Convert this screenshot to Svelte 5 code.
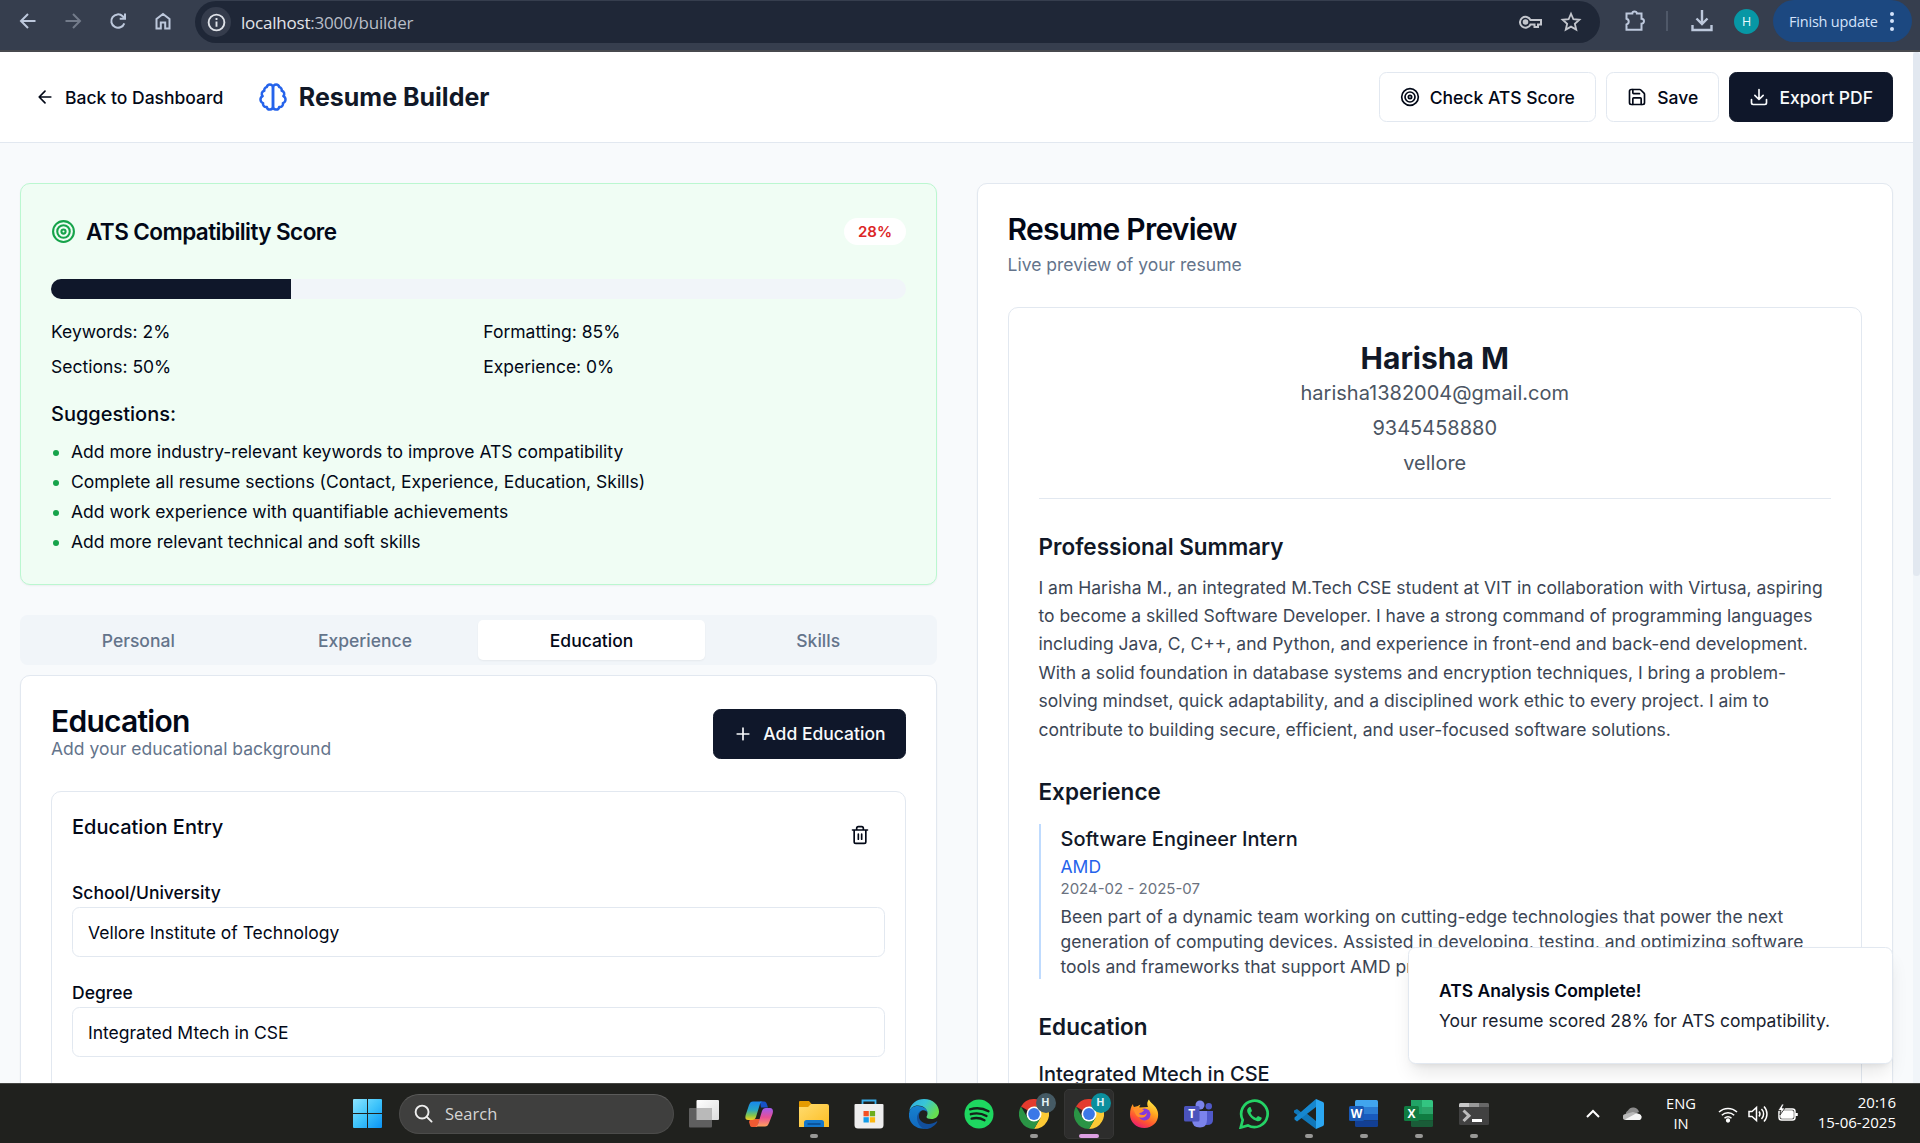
<script>
  const stats = ['Keywords: 2%', 'Formatting: 85%', 'Sections: 50%', 'Experience: 0%'];
  const suggestions = [
    'Add more industry-relevant keywords to improve ATS compatibility',
    'Complete all resume sections (Contact, Experience, Education, Skills)',
    'Add work experience with quantifiable achievements',
    'Add more relevant technical and soft skills'
  ];
  const tabs = ['Personal', 'Experience', 'Education', 'Skills'];
  let active = $state('Education');
  const score = 28;
  const fields = [
    { label: 'School/University', value: 'Vellore Institute of Technology' },
    { label: 'Degree', value: 'Integrated Mtech in CSE' }
  ];
  const summary = [
    'I am Harisha M., an integrated M.Tech CSE student at VIT in collaboration with Virtusa, aspiring',
    'to become a skilled Software Developer. I have a strong command of programming languages',
    'including Java, C, C++, and Python, and experience in front-end and back-end development.',
    'With a solid foundation in database systems and encryption techniques, I bring a problem-',
    'solving mindset, quick adaptability, and a disciplined work ethic to every project. I aim to',
    'contribute to building secure, efficient, and user-focused software solutions.'
  ];
  const duties = [
    'Been part of a dynamic team working on cutting-edge technologies that power the next',
    'generation of computing devices. Assisted in developing, testing, and optimizing software',
    'tools and frameworks that support AMD products.'
  ];
</script>

{#snippet target()}
  <svg class="line" viewBox="0 0 24 24"><circle cx="12" cy="12" r="10" /><circle cx="12" cy="12" r="6" /><circle cx="12" cy="12" r="2" /></svg>
{/snippet}

{#snippet chrome(badge)}
  <svg class="app-icon" viewBox="0 0 30 30">
    <path d="M15 15 2 7.500A15 15 0 0 1 28 7.500H15Z" fill="#e33b2e" />
    <path d="M15 15V7.500H28A15 15 0 0 1 15 30L21.500 18.700Z" fill="#fcc934" />
    <path d="M15 15l6.500 3.700L15 30A15 15 0 0 1 2 7.500l6.500 11.200Z" fill="#2a9445" />
    <circle cx="15" cy="15" r="7.500" fill="#fff" /><circle cx="15" cy="15" r="5.900" fill="#3b78e7" />
  </svg>
  <span class="profile {badge}">H</span>
{/snippet}

<div class="screen">
  <div class="toolbar">
    <div class="nav">
      <span><svg viewBox="0 0 20 20"><path d="M17.500 10H3.500M10 3 3 10l7 7" /></svg></span>
      <span class="dim"><svg viewBox="0 0 20 20"><path d="M2.500 10h14M10 3l7 7-7 7" /></svg></span>
      <span><svg viewBox="0 0 20 20"><path d="M16.300 12.300A6.700 6.700 0 1 1 14.700 5.300L17 7.500M17 2.500v5.200h-5.300" /></svg></span>
      <span><svg viewBox="0 0 20 20"><path d="M3.500 17.500V8L10 3l6.500 5v9.500h-4.300v-6H7.800v6Z" /></svg></span>
    </div>
    <div class="address">
      <span class="info"><svg viewBox="0 0 20 20"><circle cx="10" cy="10" r="7.500" /><path d="M10 9v5M10 5.800v1.700" /></svg></span>
      <span class="url"><b>localhost</b>:3000/builder</span>
      <svg class="key" viewBox="0 0 24 16"><path d="M11.500 6H22v4.500h-3V13h-3.500v-2.500h-4A5.500 5.500 0 1 1 11.500 6Z" /><circle cx="6.500" cy="8" r="1.800" fill="currentColor" /></svg>
      <svg class="star" viewBox="0 0 24 24"><path d="m12 3 2.600 6 6.500.6-4.900 4.300 1.500 6.400L12 17l-5.700 3.300 1.500-6.400-4.900-4.300L9.400 9Z" /></svg>
    </div>
    <svg class="puzzle" viewBox="0 0 24 24"><path d="M3.500 4.500h5.800a2.300 2 0 0 1 4.600 0h4.600v5.200a2.500 2.500 0 0 1 0 5v6h-15v-5.200a3 3 0 0 0 0-5.800Z" /></svg>
    <span class="divider"></span>
    <svg class="dl" viewBox="0 0 24 24"><path d="M12 1v14M6.500 9.500 12 15l5.500-5.500M2.500 16v5h19v-5" /></svg>
    <span class="avatar">H</span>
    <div class="update"><span>Finish update</span><i class="dots"><i></i><i></i><i></i></i></div>
  </div>

  <div class="viewport">
    <div class="page">
      <header>
        <div class="brand">
          <button class="back"><svg class="line" viewBox="0 0 24 24"><path d="m12 19-7-7 7-7M19 12H5" /></svg>Back to Dashboard</button>
          <svg class="line brain" viewBox="0 0 24 24">
            <path d="M9.500 2A2.500 2.500 0 0 1 12 4.500v15a2.500 2.500 0 0 1-4.960.440 2.500 2.500 0 0 1-2.960-3.080 3 3 0 0 1-.340-5.580 2.500 2.500 0 0 1 1.320-4.240 2.500 2.500 0 0 1 1.980-3A2.500 2.500 0 0 1 9.500 2Z" />
            <path d="M14.500 2A2.500 2.500 0 0 0 12 4.500v15a2.500 2.500 0 0 0 4.960.440 2.500 2.500 0 0 0 2.960-3.080 3 3 0 0 0 .340-5.580 2.500 2.500 0 0 0-1.320-4.240 2.500 2.500 0 0 0-1.980-3A2.500 2.500 0 0 0 14.500 2Z" />
          </svg>
          <h1>Resume Builder</h1>
        </div>
        <div class="actions">
          <button class="btn">{@render target()}Check ATS Score</button>
          <button class="btn"><svg class="line" viewBox="0 0 24 24"><path d="M15.200 3a2 2 0 0 1 1.400.6l3.800 3.800a2 2 0 0 1 .6 1.400V19a2 2 0 0 1-2 2H5a2 2 0 0 1-2-2V5a2 2 0 0 1 2-2z" /><path d="M17 21v-7a1 1 0 0 0-1-1H8a1 1 0 0 0-1 1v7M7 3v4a1 1 0 0 0 1 1h7" /></svg>Save</button>
          <button class="btn dark"><svg class="line" viewBox="0 0 24 24"><path d="M21 15v4a2 2 0 0 1-2 2H5a2 2 0 0 1-2-2v-4M7 10l5 5 5-5M12 15V3" /></svg>Export PDF</button>
        </div>
      </header>

      <main>
        <div class="column">
          <section class="card ats">
            <div class="ats-head">
              <h3>{@render target()}ATS Compatibility Score</h3>
              <span class="badge">{score}%</span>
            </div>
            <div class="progress"><div class="bar" style="width: {score}%"></div></div>
            <div class="stats">
              {#each stats as s}<span>{s}</span>{/each}
            </div>
            <h4>Suggestions:</h4>
            <ul>
              {#each suggestions as s}<li><i></i>{s}</li>{/each}
            </ul>
          </section>

          <div class="tabs">
            {#each tabs as t}
              <button class:active={active === t} onclick={() => (active = t)}>{t}</button>
            {/each}
          </div>

          <section class="card form">
            <div class="form-head">
              <div><h2>Education</h2><p class="muted">Add your educational background</p></div>
              <button class="btn dark"><svg class="line" viewBox="0 0 24 24"><path d="M5 12h14M12 5v14" /></svg>Add Education</button>
            </div>
            <div class="entry">
              <div class="entry-head">
                <h4>Education Entry</h4>
                <button class="trash" aria-label="Delete"><svg class="line" viewBox="0 0 24 24"><path d="M3 6h18M19 6v14c0 1-1 2-2 2H7c-1 0-2-1-2-2V6M8 6V4c0-1 1-2 2-2h4c1 0 2 1 2 2v2M10 11v6M14 11v6" /></svg></button>
              </div>
              {#each fields as f}
                <label><span>{f.label}</span><input value={f.value} /></label>
              {/each}
            </div>
          </section>
        </div>

        <section class="card preview">
          <h2>Resume Preview</h2>
          <p class="muted sub">Live preview of your resume</p>
          <article>
            <div class="person">
              <h2>Harisha M</h2>
              <p>harisha1382004@gmail.com</p>
              <p>9345458880</p>
              <p>vellore</p>
            </div>
            <h3>Professional Summary</h3>
            <div class="summary">
              {#each summary as l}<div>{l}</div>{/each}
            </div>
            <h3>Experience</h3>
            <div class="job">
              <h4>Software Engineer Intern</h4>
              <p class="company">AMD</p>
              <p class="dates">2024-02 - 2025-07</p>
              <div class="duties">{#each duties as l}<div>{l}</div>{/each}</div>
            </div>
            <h3>Education</h3>
            <h4 class="degree">Integrated Mtech in CSE</h4>
          </article>
        </section>
      </main>
    </div>
    <div class="scroll"><div class="thumb"></div></div>
    <div class="toast"><b>ATS Analysis Complete!</b><span>Your resume scored 28% for ATS compatibility.</span></div>
  </div>

  <footer>
    <svg class="win" viewBox="0 0 29 29">
      <defs><linearGradient id="wg" x1="0" y1="0" x2="1" y2="1"><stop offset="0" stop-color="#8ce4ff" /><stop offset=".5" stop-color="#3fc4fb" /><stop offset="1" stop-color="#0a93f5" /></linearGradient></defs>
      <path d="M0 1a1 1 0 0 1 1-1h13v14H0ZM15 0h13a1 1 0 0 1 1 1v13H15ZM0 15h14v14H1a1 1 0 0 1-1-1ZM15 15h14v13a1 1 0 0 1-1 1H15Z" fill="url(#wg)" />
    </svg>
    <div class="search"><svg viewBox="0 0 20 20"><circle cx="8.500" cy="8.500" r="6.800" /><path d="m13.500 13.500 5 5" /></svg>Search</div>
    <div class="apps">
      <span>
        <svg class="app-icon" viewBox="0 0 30 30"><defs><linearGradient id="tv" x1="0" y1="0" x2="1" y2="1"><stop offset="0" stop-color="#fff" /><stop offset="1" stop-color="#ddd" /></linearGradient></defs><rect x="7.500" y="1" width="22.500" height="20" rx="1" fill="url(#tv)" /><rect y="9" width="23" height="19.500" rx="1" fill="#5f5f5f" /><path d="M7.500 9H23v12H7.500Z" fill="#b9b9b9" /></svg>
      </span>
      <span>
        <svg class="app-icon" viewBox="0 0 30 30">
          <defs>
            <linearGradient id="c1" x1="0" y1="0" x2="0" y2="1"><stop offset="0" stop-color="#1787ee" /><stop offset=".45" stop-color="#28a7c5" /><stop offset=".75" stop-color="#85c64b" /><stop offset="1" stop-color="#f3cc22" /></linearGradient>
            <linearGradient id="c2" x1="0" y1="0" x2="0" y2="1"><stop offset="0" stop-color="#9f5cf0" /><stop offset=".5" stop-color="#e74f96" /><stop offset="1" stop-color="#ffa25c" /></linearGradient>
          </defs>
          <path d="M16 2.500h4c2 0 2.500 1.500 3 3l1 3h-7Z" fill="#1652c8" />
          <path d="M8 28h5l3-8H6l-1 3c1 3 1 5 3 5Z" fill="#ef5a32" />
          <path d="M9 2.500h10c-2 0-3 2-3.500 4L12 18c-.6 2-2 3-4 3H4c-3 0-3-3-2-6l3-9c1-2.500 2-3.500 4-3.500Z" fill="url(#c1)" />
          <path d="M21 27.500H11c2 0 3-2 3.500-4L18 12c.6-2 2-3 4-3h4c3 0 3.500 3 2.500 6l-3.500 9c-1 2.500-2 3.500-4 3.500Z" fill="url(#c2)" />
        </svg>
      </span>
      <span class="open">
        <svg class="app-icon" viewBox="0 0 30 30"><defs><linearGradient id="fg" x1="0" y1="0" x2="1" y2="1"><stop offset="0" stop-color="#ffdc70" /><stop offset="1" stop-color="#fdbd22" /></linearGradient></defs><path d="M0 3q0-1 1-1h9l3 3.500V9H0Z" fill="#e59b00" /><path d="M0 8h9l3-3h16q2 0 2 2v21H0Z" fill="url(#fg)" /><path d="M5 28v-4.500q0-2.500 2.500-2.500h15q2.500 0 2.500 2.500v4.500Z" fill="#1477cc" /><path d="M8.500 25h13" stroke="#09488c" stroke-width="1.500" /></svg>
      </span>
      <span>
        <svg class="app-icon" viewBox="0 0 30 30"><path d="M8.500 6V1.500h13V6" fill="none" stroke="#39aeea" stroke-width="1.800" /><path d="M.5 6q0-1 1-1h27q1 0 1 1v20q0 3.500-3.500 3.500H4Q.5 29.500.5 26Z" fill="#eeeeee" /><path d="M9.500 12h5.300v5.300H9.500Z" fill="#f25022" /><path d="M15.800 12h5.300v5.300h-5.300Z" fill="#6dad1d" /><path d="M9.500 18.200h5.300v5.300H9.500Z" fill="#139ce8" /><path d="M15.800 18.200h5.300v5.300h-5.300Z" fill="#fbb812" /></svg>
      </span>
      <span>
        <svg class="app-icon" viewBox="0 0 30 30">
          <defs>
            <linearGradient id="e1" x1="0" y1="0" x2="1" y2=".5"><stop offset="0" stop-color="#30a9e0" /><stop offset=".5" stop-color="#38c5d8" /><stop offset="1" stop-color="#66df4f" /></linearGradient>
            <linearGradient id="e2" x1="0" y1="0" x2="0" y2="1"><stop offset="0" stop-color="#1681d0" /><stop offset="1" stop-color="#1168bd" /></linearGradient>
          </defs>
          <path d="M.3 12C1.500 4.500 8 0 15 0c9 0 15 6.200 15 12.500 0 5-3.700 7.500-7.500 7.500-3.200 0-5-1-5-2 0-.8 1-1.300 1-3.500C18.500 10 14 6.500 9 6.500 4.500 6.500 1.500 9 .3 12Z" fill="url(#e1)" />
          <path d="M.2 14C.5 9.500 4 7 9 7c5 0 9.500 3 9.500 7-.4-1.700-2-2.700-4-2.700-4 0-6 4-4.500 8.700 1.500 5 6 8.500 10 9C8 32.500-1 24-.2 14Z" fill="url(#e2)" />
          <path d="M12 12c-4 4-2 10 3 12 4 1.600 9 1 12.500-1.500.6-.4 1 .1.600.7C25.500 27 21.500 30 16.500 30 10 29 6 20 9 15c.7-1.500 1.700-2.500 3-3Z" fill="#124f9c" />
        </svg>
      </span>
      <span>
        <svg class="app-icon" viewBox="0 0 30 30"><circle cx="15" cy="15" r="14.500" fill="#1ed760" /><path d="M6 10.300c6-1.700 13-1.200 18.500 1.900M6.800 15.200c5.300-1.500 11-.8 15.700 1.800M7.600 19.600c4.600-1.200 9-.6 12.900 1.600" fill="none" stroke="#15201a" stroke-width="2.300" stroke-linecap="round" /></svg>
      </span>
      <span class="open">{@render chrome('slate')}</span>
      <span class="open current">{@render chrome('teal')}</span>
      <span>
        <svg class="app-icon" viewBox="0 0 30 30">
          <defs><linearGradient id="ff" x1=".8" y1="0" x2=".3" y2="1"><stop offset="0" stop-color="#fff24a" /><stop offset=".4" stop-color="#ffa31f" /><stop offset=".75" stop-color="#ff5033" /><stop offset="1" stop-color="#e81a77" /></linearGradient></defs>
          <path d="M4 5c0 1.500.5 2.300 1 3l4-1c0 0 1-1 2.500-1.200-1 1-1.200 2-1 2.700L19 8c-1.500-3-.5-6 1-7.500.5 3 7 5.500 8.700 12C31 22 24 29 15.500 29 7 29 1 23 1 15.500 1 11 2 7.500 4 5Z" fill="url(#ff)" />
          <circle cx="15.500" cy="15.500" r="6" fill="#8539dc" /><path d="M4 10c4-1 7-1 11 1-1 3-4 2-5 4 3 2 6 1 8-1-1 6-8 6-11 2Z" fill="#ff902c" />
        </svg>
      </span>
      <span>
        <svg class="app-icon" viewBox="0 0 30 30"><circle cx="16" cy="6" r="4.500" fill="#7b83eb" /><circle cx="24.800" cy="7.300" r="3.200" fill="#5059c9" /><path d="M20 12h9v9q0 5-6 5h-3Z" fill="#5059c9" /><path d="M8 12h15v8.500q0 8-7 8-8 0-8-8Z" fill="#7b83eb" /><rect y="7" width="15.500" height="15.500" rx="1.500" fill="#4b53bc" /><text x="7.700" y="18.800" text-anchor="middle" class="glyph">T</text></svg>
      </span>
      <span>
        <svg class="app-icon" viewBox="0 0 30 30"><path d="M1.700 28.500 3.700 21a13.200 13.200 0 1 1 5.200 5.400Z" fill="none" stroke="#25d366" stroke-width="2.700" /><path d="M10.500 8c-2 1-3 3-2 5.500 1.700 4 5 7.300 9.300 8.500 2.600.7 5-.8 5-3.200L19 17l-2 2c-2.500-1-4.500-3-5.500-5.300L13 12l-1.500-4Z" fill="#25d366" /></svg>
      </span>
      <span class="open">
        <svg class="app-icon" viewBox="0 0 30 30"><path d="M22 0 7.500 13.500 3 10 0 11.500v2L22 30v-8L9 11.500" fill="#1077b9" /><path d="M22 8 3 22.500.5 20.500v-2L22 0Z" fill="#1687cf" /><path d="M22 0 29 3q1 .5 1 2v20q0 1.500-1 2l-7 3Z" fill="#2ba7f2" /></svg>
      </span>
      <span class="open">
        <svg class="app-icon" viewBox="0 0 30 30"><path d="M6 2.500q0-1.500 1.500-1.500h20q1.500 0 1.500 1.500V8H6Z" fill="#41a5ee" /><path d="M6 8h23v7H6Z" fill="#2b7cd3" /><path d="M6 15h23v6.500H6Z" fill="#185abd" /><path d="M6 21.500h23v5q0 1.500-1.500 1.500h-20Q6 28 6 26.500Z" fill="#123f94" /><rect y="7" width="15" height="15" rx="1.500" fill="#1858b5" /><text x="7.500" y="18.700" text-anchor="middle" class="glyph">W</text></svg>
      </span>
      <span class="open">
        <svg class="app-icon" viewBox="0 0 30 30"><path d="M7 2.500Q7 1 8.500 1h19Q29 1 29 2.500V8H7Z" fill="#33c481" /><path d="M7 1h11v14H7Z" fill="#21a366" /><path d="M18 8h11v7H18Z" fill="#2ba469" /><path d="M7 15h22v6.500H7Z" fill="#107c41" /><path d="M7 21.500h22v5q0 1.500-1.500 1.500h-19Q7 28 7 26.500Z" fill="#1a5c38" /><rect y="7" width="15" height="15" rx="1.500" fill="#107c41" /><text x="7.500" y="18.700" text-anchor="middle" class="glyph">X</text></svg>
      </span>
      <span class="open">
        <svg class="app-icon" viewBox="0 0 30 30"><rect y="4" width="30" height="22" rx="1.500" fill="#414141" /><path d="M0 8V5.500Q0 4 1.500 4H10v4Z" fill="#c8c8c8" /><path d="M10 4h10v4H10Z" fill="#999" /><path d="M20 4h8.500Q30 4 30 5.500V8H20Z" fill="#686868" /><path d="m4.500 11.500 5.500 5.200-5.500 5.300" fill="none" stroke="#bdbdbd" stroke-width="3" /><path d="M13 21.500h10" stroke="#fff" stroke-width="3" /></svg>
      </span>
    </div>
    <div class="tray">
      <svg class="chev" viewBox="0 0 14 10"><path d="m1 8 6-6 6 6" /></svg>
      <svg class="cloud" viewBox="0 0 20 14"><path d="M4 10a4 4 0 0 1 1-6.500A6 6 0 0 1 16 5Z" fill="#8c8c8c" /><path d="M3 13a3 3 0 0 1-.5-6L10 5l6 2a3.200 3.200 0 0 1 .5 6Z" fill="#b9b9b9" /><path d="M3.500 13a3 3 0 0 1-1.500-.5L13 6.500a4 4 0 0 1 3 .5 3.100 3.100 0 0 1 .5 6Z" fill="#f5f5f5" /></svg>
      <div class="lang">ENG<br />IN</div>
      <svg class="t20" viewBox="0 0 20 20"><path d="M1 8a13 13 0 0 1 18 0M3.800 11.200a9 9 0 0 1 12.400 0M6.500 14.300a5 5 0 0 1 7 0" /><circle cx="10" cy="16.500" r="1.400" fill="#fff" /></svg>
      <svg class="t20" viewBox="0 0 20 20"><path d="M1 7.500h3L8.500 3.500v13L4 12.500H1ZM11 7.500a4 4 0 0 1 0 5M13.500 5a7 7 0 0 1 0 10M16 2.500a11 11 0 0 1 0 15" /></svg>
      <svg class="t20" viewBox="0 0 20 20"><rect x="1" y="5" width="16" height="11" rx="2.500" /><rect x="3" y="7" width="12" height="7" rx="1" fill="#fff" /><path d="M18.500 9v3" stroke-width="2.500" /><path d="M4 0 0 6.500h3L2 11l5-7H4.200L6 0Z" fill="#fff" stroke="#20201e" stroke-width=".8" /></svg>
      <div class="clock">20:16<br />15-06-2025</div>
    </div>
  </footer>
</div>

<style>
  :global(body) { margin: 0; overflow: hidden; }
  * { box-sizing: border-box; }
  h1, h2, h3, h4, p, ul { margin: 0; padding: 0; font-weight: inherit; }
  button, input { font: inherit; color: inherit; background: none; border: 0; padding: 0; }
  svg { flex: none; display: block; }
  .screen { width: 1920px; height: 1143px; display: flex; flex-direction: column; overflow: hidden; font-family: Inter, "Liberation Sans", sans-serif; font-size: 17.5px; line-height: 25px; color: #020817; }
  .line { width: 20px; height: 20px; fill: none; stroke: currentColor; stroke-width: 2; stroke-linecap: round; stroke-linejoin: round; }

  /* browser toolbar */
  .toolbar { height: 52px; flex: none; display: flex; align-items: center; padding: 0 8px 8px 5px; background: #363e4e; border-bottom: 2px solid #47494d; font-family: "Open Sans", "Noto Sans", sans-serif; color: #bdc8dc; }
  .toolbar svg { fill: none; stroke: currentColor; stroke-width: 2; }
  .nav { display: flex; width: 190px; }
  .nav span { width: 45px; display: grid; place-items: center; }
  .nav svg { width: 20px; height: 20px; }
  .nav .dim { color: #737b8a; }
  .address { flex: 1; height: 42px; margin-top: 2px; border-radius: 21px; background: #1f2737; display: flex; align-items: center; padding: 0 18px 0 6px; color: #c3c6cd; }
  .info { width: 30px; height: 30px; border-radius: 50%; background: #353c4c; display: grid; place-items: center; color: #dfe2e8; }
  .info svg { width: 21px; height: 21px; stroke-width: 1.8; }
  .url { margin-left: 10px; flex: 1; color: #b9bec8; font-size: 17px; letter-spacing: -0.22px; }
  .url b { font-weight: 400; color: #e2e4e9; }
  .key { width: 24px; height: 16px; margin-right: 17px; }
  .star { width: 22px; height: 22px; }
  .puzzle { width: 24px; height: 24px; margin-left: 23px; }
  .divider { width: 2px; height: 20px; margin-left: 19px; background: #4f5868; }
  .dl { width: 24px; height: 24px; margin-left: 22px; }
  .toolbar .dl { stroke-width: 2.4; }
  .avatar { width: 25px; height: 25px; margin-left: 20px; border-radius: 50%; background: #0797a5; color: #e8fbff; font-size: 12.5px; display: grid; place-items: center; }
  .update { width: 139px; height: 42px; margin-left: 14px; border-radius: 21px; background: #1c4880; color: #d4e3fb; display: flex; align-items: center; justify-content: space-between; padding: 0 18px 0 16px; font-size: 14.5px; letter-spacing: -0.2px; white-space: nowrap; }
  .dots { display: grid; gap: 3.5px; }
  .dots i { width: 4px; height: 4px; border-radius: 50%; background: #d4e3fb; }

  /* application */
  .viewport { position: relative; height: 1031px; flex: none; display: flex; overflow: hidden; }
  .page { flex: 1; background: #f8fafc; }
  .scroll { width: 7px; background: #f1f5f9; }
  .thumb { height: 524px; background: #e2e8f0; border-radius: 4px; }
  header { height: 91px; background: #fff; border-bottom: 1px solid #e2e8f0; display: flex; justify-content: space-between; align-items: center; padding: 0 20px; }
  .brand, .actions { display: flex; align-items: center; }
  .actions { gap: 10px; }
  .back { height: 45px; padding: 0 15px; display: flex; align-items: center; gap: 10px; font-weight: 500; }
  .brain { width: 30px; height: 30px; margin: 0 10.5px 0 20px; color: #2563eb; }
  h1 { font-size: 25px; line-height: 35px; font-weight: 700; color: #111827; }
  .btn { height: 50px; border: 1px solid #e2e8f0; border-radius: 7.5px; background: #fff; padding: 0 20.2px; display: flex; align-items: center; gap: 10px; font-weight: 500; white-space: nowrap; }
  .btn.dark { background: #0f172a; border-color: #0f172a; color: #f8fafc; padding: 0 19px; }

  main { display: grid; grid-template-columns: 1fr 1fr; gap: 40px; padding: 40px 20px; align-items: start; }
  .card { border: 1px solid #e2e8f0; border-radius: 10px; background: #fff; padding: 30px; box-shadow: 0 1px 2px rgba(0, 0, 0, 0.05); }
  .ats { background: #f0fdf4; border-color: #bbf7d0; }
  .ats-head { display: flex; justify-content: space-between; align-items: center; height: 35px; margin-bottom: 30px; }
  .ats-head h3 { display: flex; align-items: center; gap: 10px; font-size: 22.5px; font-weight: 600; letter-spacing: -0.025em; }
  .ats-head h3 :global(svg) { width: 25px; height: 25px; color: #16a34a; }
  .badge { background: #fff; color: #dc2626; border-radius: 14px; padding: 3.5px 13.5px; font-size: 15px; line-height: 20px; font-weight: 600; }
  .progress { height: 20px; border-radius: 10px; background: #f1f5f9; overflow: hidden; }
  .bar { height: 100%; background: #0f172a; box-sizing: content-box; padding-right: 0.6px; }
  .stats { display: grid; grid-template-columns: 1fr 1fr; gap: 10px; margin: 20px 0; }
  h4 { font-size: 20px; line-height: 30px; font-weight: 500; }
  ul { list-style: none; display: grid; gap: 5px; margin-top: 10px; }
  li { display: flex; align-items: center; }
  li i { width: 6px; height: 6px; border-radius: 50%; background: #16a34a; margin: 3px 12px 0 2px; }

  .tabs { height: 50px; margin: 30px 0 10px; padding: 5px; border-radius: 7.5px; background: #f1f5f9; display: grid; grid-template-columns: repeat(4, 1fr); color: #64748b; font-weight: 500; }
  .tabs button { border-radius: 5px; }
  .tabs .active { background: #fff; color: #020817; box-shadow: 0 1px 2px rgba(0, 0, 0, 0.05); }
  .form { height: 700px; }
  .form-head { display: flex; justify-content: space-between; align-items: center; height: 55px; margin-bottom: 30px; }
  h2 { font-size: 30px; line-height: 30px; font-weight: 600; letter-spacing: -0.025em; }
  .muted { color: #64748b; }
  .entry { border: 1px solid #e2e8f0; border-radius: 10px; padding: 20px; height: 500px; }
  .entry-head { display: flex; justify-content: space-between; align-items: flex-start; height: 45px; margin-bottom: 20px; }
  .trash { height: 45px; padding: 0 15px; }
  label { display: block; font-weight: 500; margin-bottom: 20px; }
  label span { display: block; height: 30px; line-height: 32px; }
  input { display: block; width: 100%; height: 50px; border: 1px solid #e2e8f0; border-radius: 7.5px; padding: 0 15px; background: #fff; font-weight: 400; }

  .preview { height: 1300px; }
  .sub { margin-top: 7.5px; }
  article { margin-top: 30px; border: 1px solid #e2e8f0; border-radius: 10px; padding: 30px; height: 1100px; color: #111827; }
  .person { text-align: center; border-bottom: 1px solid #e2e8f0; padding-bottom: 20px; margin-bottom: 30px; color: #4b5563; font-size: 20px; line-height: 30px; display: grid; }
  .person h2 { line-height: 40px; font-weight: 700; color: #111827; letter-spacing: 0; }
  .person p + p { margin-top: 5px; }
  article h3 { font-size: 22.5px; line-height: 35px; font-weight: 600; }
  .summary { margin: 10px 0 30px; line-height: 28.44px; color: #3c4655; white-space: nowrap; }
  .job { margin: 15px 0 30px; border-left: 2px solid #bfdbfe; padding-left: 20px; }
  .company { color: #2563eb; }
  .dates { font-size: 15px; line-height: 20px; color: #6b7280; }
  .duties { margin-top: 5px; color: #3c4655; white-space: nowrap; }
  .degree { margin-top: 15px; }

  .toast { position: absolute; right: 27px; bottom: 19px; width: 485px; height: 117px; border: 1px solid #e2e8f0; border-radius: 7.5px; background: #fff; padding: 30px; display: grid; align-content: start; gap: 5px; box-shadow: 0 12px 19px -4px rgba(0, 0, 0, 0.1), 0 5px 7px -5px rgba(0, 0, 0, 0.1); white-space: nowrap; }
  .toast b { font-weight: 600; }
  .toast span { opacity: 0.9; }

  /* desktop taskbar */
  footer { height: 60px; flex: none; background: #20211e; border-top: 1px solid #454643; display: flex; align-items: center; padding: 0 24px 0 353px; color: #fff; font-family: "Open Sans", "Noto Sans", sans-serif; }
  .win { width: 29px; height: 29px; }
  .search { width: 275px; height: 40px; margin: 0 2.5px 0 17px; border-radius: 20px; background: #3f3f3e; border: 1px solid #4c4c4b; border-top-color: #5b5b5a; display: flex; align-items: center; gap: 12px; padding-left: 14px; font-size: 16.5px; color: #d5d5d4; }
  .search svg { width: 19px; height: 19px; fill: none; stroke: #eee; stroke-width: 2; stroke-linecap: round; }
  .apps { display: flex; }
  .apps > span { position: relative; width: 55px; height: 50px; display: grid; place-items: center; }
  .app-icon { width: 30px; height: 30px; }
  .open::after { content: ""; position: absolute; bottom: 1px; left: 23.5px; width: 8px; height: 4px; border-radius: 2px; background: #989896; }
  .current { z-index: 0; }
  .current::before { content: ""; position: absolute; z-index: -1; inset: 0 2.5px; border-radius: 5px; background: #2d2d2c; border: 1px solid #363635; }
  .current::after { left: 17.5px; width: 20px; background: #dc9fe2; }
  .profile { position: absolute; left: 29px; top: 4px; width: 20px; height: 20px; border-radius: 50%; display: grid; place-items: center; color: #e4f2f4; font: 700 11px Roboto, sans-serif; }
  .slate { background: #455a64; }
  .teal { background: #0b8f9d; }
  .glyph { font: 700 12px "Open Sans", sans-serif; fill: #fff; }
  .tray { margin-left: auto; display: flex; align-items: center; font-size: 14.7px; line-height: 20px; }
  .tray svg { fill: none; stroke: #fff; stroke-width: 1.5; }
  .tray .chev { width: 14px; height: 10px; margin-right: 23px; stroke-width: 2; }
  .tray .cloud { width: 20px; height: 14px; margin-right: 22px; stroke: none; }
  .lang { width: 32px; margin-right: 21px; padding-bottom: 2px; text-align: center; }
  .t20 { width: 20px; height: 20px; margin-right: 10px; }
  .clock { width: 88px; padding-bottom: 4px; text-align: right; font-size: 15px; }
</style>
